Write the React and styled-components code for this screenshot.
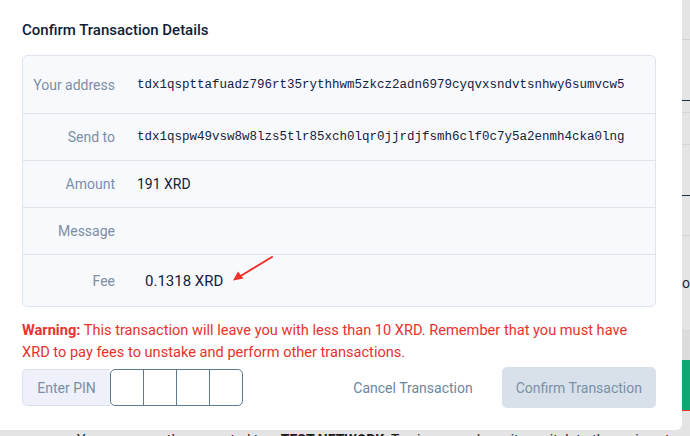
import styled, { createGlobalStyle } from "styled-components"

const Global = createGlobalStyle`
    html, body {
        margin: 0;
        padding: 0;
        background: #e4e4e4;
    }
    body {
        font-family: Roboto, "Liberation Sans", sans-serif;
    }
`

const Page = styled.div`
    width: 690px;
    height: 436px;
    overflow: hidden;
    display: flex;
    flex-direction: column;
    background: #e4e4e4;
`

const Top = styled.div`
    display: flex;
    height: 430px;
    flex-shrink: 0;
`

const Modal = styled.div`
    width: 682px;
    box-sizing: border-box;
    background: #ffffff;
    border-bottom-right-radius: 6px;
    padding: 20px 26px 22px 22px;
    display: flex;
    flex-direction: column;
`

const Title = styled.h2`
    margin: 0 0 15px;
    font-size: 15px;
    line-height: 20px;
    font-weight: 500;
    color: #0e1d3a;
`

const Table = styled.div`
    border: 1px solid #dde4ee;
    border-radius: 5px;
    background: #f8f9fd;
    display: flex;
    flex-direction: column;
`

const Row = styled.div`
    box-sizing: border-box;
    display: grid;
    grid-template-columns: 92px 1fr;
    column-gap: 22px;
    align-items: center;
    height: ${p => p.$h}px;
    border-bottom: ${p => (p.$last ? "none" : "1px solid #dfe5ee")};
`

const Label = styled.div`
    text-align: right;
    font-size: 14px;
    color: #7b8fa6;
    white-space: nowrap;
`

const Value = styled.div`
    font-size: ${p => (p.$big ? 15 : 14)}px;
    color: #13223f;
    padding-left: ${p => p.$indent || 0}px;
    display: flex;
    align-items: center;
`

const Mono = styled.span`
    font-family: "Liberation Mono", "DejaVu Sans Mono", monospace;
    font-size: 12.5px;
    color: #13223f;
    white-space: nowrap;
`

const Annotated = styled.span`
    position: relative;
    display: inline-block;
`

const Arrow = styled.svg`
    position: absolute;
    left: calc(100% + 9px);
    top: -16px;
    width: 42px;
    height: 26px;
`

const Warning = styled.p`
    margin: 12px 0 4px;
    max-width: 625px;
    font-size: 14.6px;
    line-height: 22px;
    color: #e6332e;
    & > b {
        font-weight: 700;
    }
`

const Actions = styled.div`
    display: flex;
    align-items: center;
    height: 41px;
`

const Pin = styled.div`
    display: flex;
    height: 37px;
`

const PinLabel = styled.div`
    box-sizing: border-box;
    width: 88px;
    display: flex;
    align-items: center;
    justify-content: center;
    background: #eef0fa;
    border: 1px solid #dbe2ee;
    border-right: none;
    border-radius: 5px 0 0 5px;
    font-size: 14px;
    color: #7b8fa6;
`

const PinCells = styled.div`
    display: flex;
    border: 1px solid #5e7a90;
    border-radius: 5px;
    overflow: hidden;
    background: #ffffff;
`

const Cell = styled.div`
    width: 32px;
    height: 100%;
    border-left: ${p => (p.$first ? "none" : "1px solid #5e7a90")};
`

const Spacer = styled.div`
    flex: 1;
`

const Button = styled.button`
    font-family: inherit;
    font-size: 14px;
    border: none;
    border-radius: 5px;
    height: 41px;
    padding: 0 14px;
    cursor: pointer;
    background: ${p => (p.$primary ? "#d8e0ea" : "transparent")};
    color: ${p => (p.$primary ? "#7891a7" : "#6a87a0")};
    margin-left: ${p => (p.$primary ? 15 : 0)}px;
`

const Side = styled.div`
    flex: 1;
    display: flex;
    flex-direction: column;
    overflow: hidden;
`

const Band = styled.div`
    height: ${p => p.$h}px;
    flex-shrink: 0;
    background: ${p => p.$bg || "transparent"};
    border-bottom: ${p => (p.$line ? `1px solid ${p.$line}` : "none")};
    font-size: 14px;
    line-height: ${p => p.$h}px;
    color: #1a2740;
    white-space: nowrap;
`

const Footer = styled.div`
    padding: 2px 0 0 77px;
    font-size: 14px;
    line-height: 16px;
    color: #1a1a1a;
    white-space: nowrap;
`

const rows = [
    { label: "Your address", value: <Mono>tdx1qspttafuadz796rt35rythhwm5zkcz2adn6979cyqvxsndvtsnhwy6sumvcw5</Mono>, h: 58 },
    { label: "Send to", value: <Mono>tdx1qspw49vsw8w8lzs5tlr85xch0lqr0jjrdjfsmh6clf0c7y5a2enmh4cka0lng</Mono>, h: 47 },
    { label: "Amount", value: "191 XRD", h: 47 },
    { label: "Message", value: "", h: 47 },
]

const App = () => {
    return (
        <Page>
            <Global />
            <Top>
                <Modal>
                    <Title>Confirm Transaction Details</Title>
                    <Table>
                        {rows.map(r => (
                            <Row key={r.label} $h={r.h}>
                                <Label>{r.label}</Label>
                                <Value>{r.value}</Value>
                            </Row>
                        ))}
                        <Row $h={51} $last>
                            <Label>Fee</Label>
                            <Value $big $indent={8}>
                                <Annotated>
                                    0.1318 XRD
                                    <Arrow viewBox="0 0 42 26">
                                        <line x1="40" y1="1" x2="7" y2="21" stroke="#f0302a" strokeWidth="2" strokeLinecap="round" />
                                        <path d="M1 24.5 L6 15.5 L11.5 22.5 Z" fill="#f0302a" />
                                    </Arrow>
                                </Annotated>
                            </Value>
                        </Row>
                    </Table>
                    <Warning>
                        <b>Warning:</b> This transaction will leave you with less than 10 XRD. Remember that you must have XRD to pay fees to unstake and perform other transactions.
                    </Warning>
                    <Actions>
                        <Pin>
                            <PinLabel>Enter PIN</PinLabel>
                            <PinCells>
                                <Cell $first />
                                <Cell />
                                <Cell />
                                <Cell />
                            </PinCells>
                        </Pin>
                        <Spacer />
                        <Button>Cancel Transaction</Button>
                        <Button $primary>Confirm Transaction</Button>
                    </Actions>
                </Modal>
                <Side>
                    <Band $h={39} $line="#d2d2d2" />
                    <Band $h={60} $line="#1d2b45" />
                    <Band $h={11} $line="#d6d6d6" />
                    <Band $h={31} $line="#d6d6d6" />
                    <Band $h={50} $line="#1d2b45" />
                    <Band $h={39} $line="#d6d6d6" />
                    <Band $h={94} $line="#d6d6d6">ot</Band>
                    <Band $h={29} $bg="#dcdcdc" />
                    <Band $h={50} $bg="#0ea672" $line="#e8322c" />
                </Side>
            </Top>
            <Footer>
                You are currently connected to a <b>TEST NETWORK</b>. To view your deposits, switch to the main network.
            </Footer>
        </Page>
    )
}

export default App
